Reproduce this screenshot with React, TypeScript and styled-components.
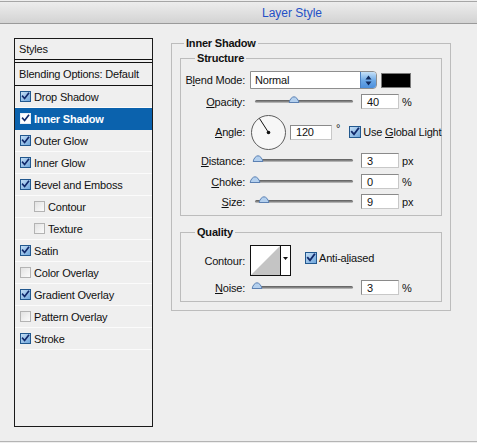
import React from "react";
import styled, { createGlobalStyle } from "styled-components";

const GlobalStyle = createGlobalStyle`
  html, body { margin: 0; padding: 0; background: #eeeeee; }
  body {
    font-family: "Liberation Sans", Arial, sans-serif;
    font-size: 11px;
    letter-spacing: -0.2px;
    color: #111;
  }
  u { text-underline-offset: 1px; }
`;

type StyleItem = { label: string; checked: boolean; indent?: boolean; active?: boolean };

const STYLE_ITEMS: StyleItem[] = [
  { label: "Drop Shadow", checked: true },
  { label: "Inner Shadow", checked: true, active: true },
  { label: "Outer Glow", checked: true },
  { label: "Inner Glow", checked: true },
  { label: "Bevel and Emboss", checked: true },
  { label: "Contour", checked: false, indent: true },
  { label: "Texture", checked: false, indent: true },
  { label: "Satin", checked: true },
  { label: "Color Overlay", checked: false },
  { label: "Gradient Overlay", checked: true },
  { label: "Pattern Overlay", checked: false },
  { label: "Stroke", checked: true },
];

function CheckBox({ checked, size = 11, $inverse }: { checked: boolean; size?: number; $inverse?: boolean }) {
  return (
    <Box $checked={checked} $size={size} $inverse={$inverse}>
      {checked && (
        <svg width={size} height={size} viewBox="0 0 11 11">
          <path d="M2 5.2 L4.4 8 L9.2 1.6" fill="none" stroke="#10286a" strokeWidth="2" strokeLinecap="square" />
        </svg>
      )}
    </Box>
  );
}

function Slider({ pos }: { pos: number }) {
  return (
    <SliderBox>
      <Track>
        <Thumb style={{ left: `${pos * 100}%` }}>
          <svg width="11" height="7" viewBox="0 0 11 7">
            <path d="M0.5 6.5 C1.5 3 3.5 0.8 5.5 0.8 C7.5 0.8 9.5 3 10.5 6.5 Z" fill="#b4d0ee" stroke="#5b80b2" />
          </svg>
        </Thumb>
      </Track>
    </SliderBox>
  );
}

function SliderRow({ label, pos, value, unit, h, mt }: { label: React.ReactNode; pos: number; value: string; unit: string; h: number; mt: number }) {
  return (
    <Row $h={h} $mt={mt}>
      <Label>{label}</Label>
      <Slider pos={pos} />
      <NumInput>{value}</NumInput>
      <Unit>{unit}</Unit>
    </Row>
  );
}

export default function App() {
  return (
    <>
      <GlobalStyle />
      <Window>
        <TitleBar>Layer Style</TitleBar>
        <Body>
          <StyleList>
            <ListHeader>Styles</ListHeader>
            <BlendRow>Blending Options: Default</BlendRow>
            {STYLE_ITEMS.map((item) => (
              <ItemRow key={item.label} $active={item.active} $indent={item.indent}>
                <CheckBox checked={item.checked} $inverse={item.active} />
                <span>{item.label}</span>
              </ItemRow>
            ))}
          </StyleList>

          <RightCol>
            <Group $pad="2px 8px 8px 8px">
              <Legend $ml={4}>Inner Shadow</Legend>

              <SubGroup $pad="6px 0 5px 0">
                <Legend $ml={14}>Structure</Legend>
                <Row $h={18} $mt={0}>
                  <Label>
                    B<u>l</u>end Mode:
                  </Label>
                  <Select>
                    <SelectText>Normal</SelectText>
                    <Spinner>
                      <svg width="7" height="11" viewBox="0 0 7 11">
                        <path d="M3.5 0.5 L6.5 4.5 L0.5 4.5 Z" fill="#0f2a5e" />
                        <path d="M3.5 10.5 L6.5 6.5 L0.5 6.5 Z" fill="#0f2a5e" />
                      </svg>
                    </Spinner>
                  </Select>
                  <Swatch />
                </Row>
                <SliderRow label={<><u>O</u>pacity:</>} pos={0.4} value="40" unit="%" h={17} mt={4} />
                <Row $h={36} $mt={4}>
                  <Label>
                    <u>A</u>ngle:
                  </Label>
                  <Dial>
                    <svg width="36" height="36" viewBox="0 0 36 36">
                      <circle cx="18.5" cy="18.5" r="17" fill="#f7f7f7" stroke="#5c5c5c" strokeWidth="1" />
                      <line x1="18.5" y1="18.5" x2="9.5" y2="4.5" stroke="#111" strokeWidth="1" />
                      <circle cx="18.5" cy="18.5" r="1.8" fill="#111" />
                    </svg>
                  </Dial>
                  <NumInput $w={42} $ml={4}>
                    120
                  </NumInput>
                  <Degree>°</Degree>
                  <CheckLabel $ml={9}>
                    <CheckBox checked size={12} />
                    <span>
                      Use <u>G</u>lobal Light
                    </span>
                  </CheckLabel>
                </Row>
                <SliderRow label={<><u>D</u>istance:</>} pos={0.028} value="3" unit="px" h={17} mt={2} />
                <SliderRow label={<><u>C</u>hoke:</>} pos={0} value="0" unit="%" h={17} mt={4} />
                <SliderRow label={<><u>S</u>ize:</>} pos={0.09} value="9" unit="px" h={17} mt={3} />
              </SubGroup>

              <SubGroup $pad="6px 0 6px 0" $mt={10}>
                <Legend $ml={14}>Quality</Legend>
                <Row $h={31} $mt={0}>
                  <Label>Contour:</Label>
                  <ContourPicker>
                    <ContourCurve>
                      <svg width="29" height="29" viewBox="0 0 29 29">
                        <path d="M0 29 L29 0 L29 29 Z" fill="#c4c4c4" />
                      </svg>
                    </ContourCurve>
                    <ContourArrow>
                      <svg width="5" height="3" viewBox="0 0 5 3">
                        <path d="M0 0 L5 0 L2.5 3 Z" fill="#111" />
                      </svg>
                    </ContourArrow>
                  </ContourPicker>
                  <CheckLabel $ml={14} $top>
                    <CheckBox checked size={12} />
                    <span>
                      Anti-a<u>l</u>iased
                    </span>
                  </CheckLabel>
                </Row>
                <SliderRow label={<><u>N</u>oise:</>} pos={0.025} value="3" unit="%" h={15} mt={4} />
              </SubGroup>
            </Group>
          </RightCol>
        </Body>
      </Window>
    </>
  );
}

const Window = styled.div`
  width: 477px;
  height: 441px;
  background: #eeeeee;
  border-bottom: 1px solid #b4b4b4;
  overflow: hidden;
`;

const TitleBar = styled.div`
  height: 21px;
  margin-top: 1px;
  border-top: 1px solid #a6a6a6;
  border-bottom: 1px solid #9a9a9a;
  background: linear-gradient(#ededed, #d3d3d3);
  display: flex;
  align-items: center;
  padding-left: 262px;
  font-size: 12px;
  letter-spacing: 0;
  color: #2450c6;
`;

const Body = styled.div`
  display: flex;
  align-items: flex-start;
  padding: 14px 0 0 14px;
`;

const StyleList = styled.div`
  width: 139px;
  height: 389px;
  box-sizing: border-box;
  border: 1px solid #1a1a1a;
  background: #efefef;
`;

const ListHeader = styled.div`
  height: 20px;
  border-bottom: 4px double #111;
  padding-left: 4px;
  display: flex;
  align-items: center;
`;

const BlendRow = styled.div`
  height: 22px;
  border-bottom: 1px solid #111;
  padding-left: 4px;
  display: flex;
  align-items: center;
  white-space: nowrap;
`;

const ItemRow = styled.div<{ $active?: boolean; $indent?: boolean }>`
  height: 21px;
  border-bottom: 1px solid ${({ $active }) => ($active ? "#0b62ad" : "#fbfbfb")};
  display: flex;
  align-items: center;
  gap: 3px;
  padding-left: ${({ $indent }) => ($indent ? 19 : 5)}px;
  background: ${({ $active }) => ($active ? "#0b62ad" : "transparent")};
  color: ${({ $active }) => ($active ? "#fff" : "#111")};
  font-weight: ${({ $active }) => ($active ? "bold" : "normal")};
`;

const Box = styled.span<{ $checked: boolean; $size: number; $inverse?: boolean }>`
  width: ${({ $size }) => $size}px;
  height: ${({ $size }) => $size}px;
  box-sizing: border-box;
  flex-shrink: 0;
  display: inline-flex;
  align-items: center;
  justify-content: center;
  border: 1px solid
    ${({ $checked, $inverse }) => ($inverse ? "#e8eef6" : $checked ? "#22588e" : "#b3b3b3")};
  background: ${({ $checked, $inverse }) =>
    $inverse
      ? "#ffffff"
      : $checked
      ? "linear-gradient(135deg, #c4def5, #6fa6dc)"
      : "linear-gradient(135deg, #e2e2e2, #fbfbfb)"};
  svg {
    display: block;
    margin-top: -1px;
  }
`;

const RightCol = styled.div`
  margin-left: 18px;
  margin-top: -1px;
`;

const Group = styled.fieldset<{ $pad: string }>`
  margin: 0;
  padding: ${({ $pad }) => $pad};
  border: 1px solid #bcbcbc;
  min-width: 0;
`;

const SubGroup = styled.fieldset<{ $pad: string; $mt?: number }>`
  width: 262px;
  box-sizing: border-box;
  margin: ${({ $mt }) => $mt ?? 0}px 0 0 0;
  padding: ${({ $pad }) => $pad};
  border: 1px solid #bcbcbc;
  min-width: 0;
`;

const Legend = styled.legend<{ $ml: number }>`
  margin-left: ${({ $ml }) => $ml}px;
  padding: 0 2px;
  font-weight: bold;
  line-height: 13px;
`;

const Row = styled.div<{ $h: number; $mt: number }>`
  display: flex;
  align-items: center;
  height: ${({ $h }) => $h}px;
  margin-top: ${({ $mt }) => $mt}px;
  white-space: nowrap;
`;

const Label = styled.span`
  width: 64px;
  margin-right: 5px;
  flex-shrink: 0;
  text-align: right;
`;

const Select = styled.div`
  width: 127px;
  height: 18px;
  box-sizing: border-box;
  display: flex;
  border: 1px solid #8e8e8e;
  border-radius: 0 4px 4px 0;
  background: #fff;
  overflow: hidden;
`;

const SelectText = styled.span`
  flex: 1;
  padding-left: 4px;
  display: flex;
  align-items: center;
`;

const Spinner = styled.span`
  width: 15px;
  display: flex;
  align-items: center;
  justify-content: center;
  border-left: 1px solid #4a80c2;
  background: linear-gradient(#c6e1f8, #6aa7e6 55%, #4c8fdc);
`;

const Swatch = styled.span`
  width: 30px;
  height: 15px;
  box-sizing: border-box;
  margin-left: 4px;
  background: #000;
  border: 1px solid #7a7a7a;
`;

const SliderBox = styled.div`
  width: 106px;
  flex-shrink: 0;
`;

const Track = styled.div`
  position: relative;
  height: 3px;
  margin: 0 3px 0 5px;
  border-radius: 2px;
  background: linear-gradient(#5a5a5a, #8c8c8c 60%, #cdcdcd);
`;

const Thumb = styled.span`
  position: absolute;
  top: -4px;
  transform: translateX(-50%);
  line-height: 0;
`;

const NumInput = styled.span<{ $w?: number; $ml?: number }>`
  width: ${({ $w }) => $w ?? 38}px;
  height: 15px;
  box-sizing: border-box;
  flex-shrink: 0;
  margin-left: ${({ $ml }) => $ml ?? 5}px;
  padding-left: 5px;
  display: flex;
  align-items: center;
  background: #fff;
  border: 1px solid #8a8a8a;
  border-right-color: #c8c8c8;
  border-bottom-color: #c8c8c8;
`;

const Unit = styled.span`
  margin-left: 3px;
`;

const Dial = styled.span`
  width: 36px;
  height: 36px;
  flex-shrink: 0;
  line-height: 0;
`;

const Degree = styled.span`
  align-self: flex-start;
  margin-top: 8px;
  margin-left: 4px;
`;

const CheckLabel = styled.label<{ $ml: number; $top?: boolean }>`
  display: flex;
  align-items: center;
  gap: 2px;
  flex-shrink: 0;
  white-space: nowrap;
  margin-left: ${({ $ml }) => $ml}px;
  align-self: ${({ $top }) => ($top ? "flex-start" : "center")};
  margin-top: ${({ $top }) => ($top ? 7 : 0)}px;
`;

const ContourPicker = styled.div`
  width: 41px;
  height: 31px;
  box-sizing: border-box;
  border: 1px solid #111;
  display: flex;
  background: #fff;
`;

const ContourCurve = styled.span`
  width: 29px;
  line-height: 0;
  border-right: 1px solid #111;
  display: flex;
  align-items: flex-end;
`;

const ContourArrow = styled.span`
  flex: 1;
  display: flex;
  justify-content: center;
  padding-top: 11px;
  line-height: 0;
`;
